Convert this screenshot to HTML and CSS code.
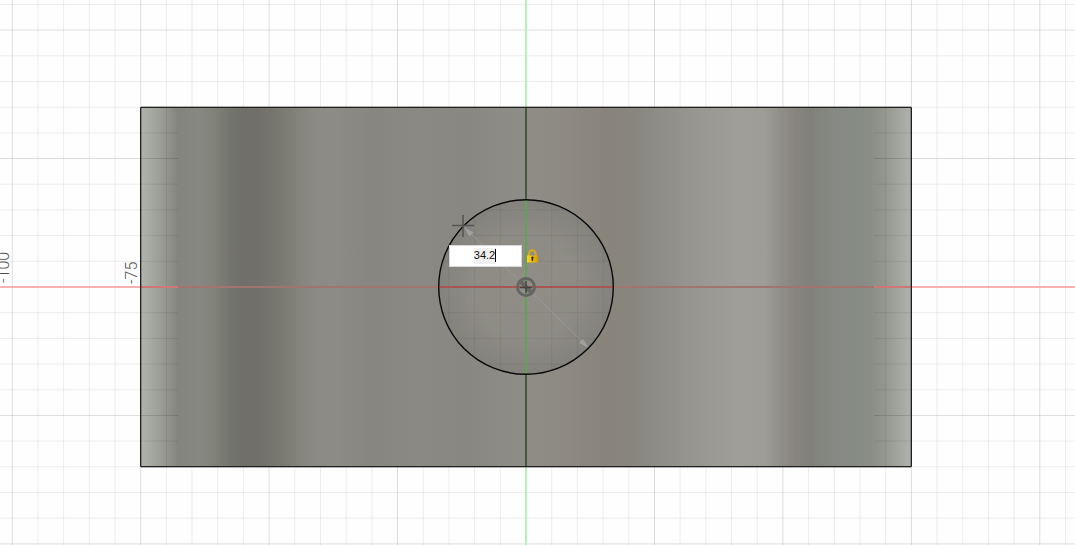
FILE: index.html
```html
<!DOCTYPE html>
<html lang="en">
<head>
<meta charset="utf-8">
<title>Sketch</title>
<link rel="stylesheet" href="styles.css">
</head>
<body>
<main class="viewport">
  <svg class="canvas" viewBox="0 0 1075 545" preserveAspectRatio="xMidYMid slice" role="img" aria-label="Sketch canvas">
    <defs>
      <linearGradient id="metal" gradientUnits="userSpaceOnUse" x1="141" y1="0" x2="911" y2="0">
        <stop offset="0" stop-color="#b1b4ad"/>
        <stop offset=".02" stop-color="#a0a39c"/>
        <stop offset=".034" stop-color="#92948d"/>
        <stop offset=".048" stop-color="#83847d"/>
        <stop offset=".075" stop-color="#868881"/>
        <stop offset=".092" stop-color="#82847c"/>
        <stop offset=".116" stop-color="#74756d"/>
        <stop offset=".133" stop-color="#706f69"/>
        <stop offset=".15" stop-color="#716f69"/>
        <stop offset=".168" stop-color="#75746c"/>
        <stop offset=".19" stop-color="#7e7d74"/>
        <stop offset=".206" stop-color="#85847c"/>
        <stop offset=".226" stop-color="#8b8a84"/>
        <stop offset=".25" stop-color="#8c8b86"/>
        <stop offset=".3" stop-color="#878680"/>
        <stop offset=".36" stop-color="#8a8983"/>
        <stop offset=".42" stop-color="#888781"/>
        <stop offset=".499" stop-color="#8e8d87"/>
        <stop offset=".501" stop-color="#908d86"/>
        <stop offset=".55" stop-color="#8d8a83"/>
        <stop offset=".608" stop-color="#88847c"/>
        <stop offset=".64" stop-color="#88867f"/>
        <stop offset=".67" stop-color="#8d8c86"/>
        <stop offset=".73" stop-color="#9a9892"/>
        <stop offset=".78" stop-color="#9f9e98"/>
        <stop offset=".81" stop-color="#9d9c95"/>
        <stop offset=".83" stop-color="#918f89"/>
        <stop offset=".85" stop-color="#86847d"/>
        <stop offset=".87" stop-color="#80817a"/>
        <stop offset=".9" stop-color="#868984"/>
        <stop offset=".945" stop-color="#898d86"/>
        <stop offset=".965" stop-color="#93968d"/>
        <stop offset="1" stop-color="#b0b2ad"/>
      </linearGradient>
      <radialGradient id="bore">
        <stop offset="0" stop-color="#918e87"/>
        <stop offset=".6" stop-color="#8e8c85"/>
        <stop offset="1" stop-color="#84837d"/>
      </radialGradient>
      <linearGradient id="gold" x1="0" y1="0" x2="1" y2="0">
        <stop offset="0" stop-color="#f9d52c"/>
        <stop offset=".5" stop-color="#ecbc0c"/>
        <stop offset="1" stop-color="#cf9b00"/>
      </linearGradient>
      <clipPath id="circle-area"><circle cx="526" cy="287" r="87"/></clipPath>
      <clipPath id="edge-area"><path d="M141 107h37v360h-37zM874 107h37v360h-37z"/></clipPath>
      <g id="grid">
        <path class="minor" d="M37.9 0V545M63.6 0V545M89.3 0V545M115 0V545M166.4 0V545M192 0V545M217.7 0V545M243.4 0V545M294.8 0V545M320.5 0V545M346.2 0V545M371.9 0V545M423.2 0V545M448.9 0V545M474.6 0V545M500.3 0V545M551.7 0V545M577.4 0V545M603.1 0V545M628.8 0V545M680.1 0V545M705.8 0V545M731.5 0V545M757.2 0V545M808.6 0V545M834.3 0V545M860 0V545M885.7 0V545M937 0V545M962.7 0V545M988.4 0V545M1014.1 0V545M1065.5 0V545M0 4.4H1075M0 55.8H1075M0 81.5H1075M0 107.2H1075M0 132.9H1075M0 184.2H1075M0 209.9H1075M0 235.6H1075M0 261.3H1075M0 312.7H1075M0 338.4H1075M0 364.1H1075M0 389.8H1075M0 441.1H1075M0 466.8H1075M0 492.5H1075M0 518.2H1075"/>
        <path class="major" d="M12.3 0V545M140.7 0V545M269.1 0V545M397.5 0V545M654.5 0V545M782.9 0V545M911.4 0V545M1039.8 0V545M0 30H1075M0 158.5H1075M0 415.5H1075M0 543.9H1075"/>
      </g>
    </defs>

    <use href="#grid"/>
    <path class="axis-x" d="M0 287H1075"/>
    <path class="axis-y" d="M526 0V545"/>

    <rect x="141" y="107" width="770" height="359.5" fill="url(#metal)"/>
    <use href="#grid" clip-path="url(#edge-area)"/>
    <path class="axis-x-body" d="M178 287H874"/>
    <path class="axis-x-edge" d="M141 287H178M874 287H911"/>
    <path class="axis-y-body" d="M526 107V467"/>
    <path class="body-edge-soft" d="M141 106.5H911M141 467.5H911M141.5 108V466M910.5 108V466"/>
    <path class="body-edge" d="M140.5 107.5H911.5V466.5H140.5Z"/>

    <circle cx="526" cy="287" r="87" fill="url(#bore)"/>
    <use class="bore-grid" href="#grid" clip-path="url(#circle-area)"/>
    <path class="dimension" d="M464 227L588 347"/>
    <path class="dimension-head" d="M464 227l9.500 5.500-4 4zM589 348l-10-5 4-4z"/>
    <path class="axis-x-bore" d="M439 287H613"/>
    <path class="axis-y-bore" d="M526 200V374"/>
    <circle class="sketch-circle" cx="526" cy="287" r="87.3"/>

    <path class="cursor" d="M452 225.5H474M463 215V237"/>
    <circle class="origin-ring" cx="526" cy="287" r="8.5"/>
    <path class="origin-bar" d="M520 281L532 293"/>
    <path class="origin-cross" d="M520 287.5H532M526 281V293"/>

    <text class="tick" transform="translate(9 283) rotate(-90)">-100</text>
    <text class="tick" transform="translate(137 284) rotate(-90)">-75</text>

    <path class="shackle" d="M529 256V253.500a3.300 3.300 0 0 1 6.600 0V256"/>
    <path class="lock-body" d="M527 255.500h11v7h-11z" fill="url(#gold)"/>
    <path class="keyhole" d="M532.400 256.300l1.700 1.700-1 .6V261h-1.400v-2.400l-1-.6z"/>
  </svg>
  <input class="dimension-input" type="text" value="34.2" aria-label="Diameter">
  <span class="caret"></span>
</main>
</body>
</html>
```
FILE: styles.css
```css
body {
  margin: 0;
  background: #fefefe;
}

.viewport {
  position: relative;
  height: 100vh;
  overflow: hidden;
  font-family: "Liberation Sans", Arial, sans-serif;
}

.canvas {
  display: block;
  width: 100%;
  height: 100%;
}

.canvas path,
.sketch-circle,
.origin-ring {
  fill: none;
}

.minor { stroke: rgba(0, 0, 0, 0.07); }
.major { stroke: rgba(0, 0, 0, 0.13); }
.bore-grid { opacity: 0.8; }

.axis-x { stroke: #f9b0b0; stroke-width: 2; }
.axis-y { stroke: #b5f2b5; stroke-width: 2; }
.axis-x-body { stroke: #a3736d; stroke-width: 2; }
.axis-x-edge { stroke: #cf7773; stroke-width: 2; }
.axis-y-body { stroke: #405c3e; stroke-width: 2; }
.axis-x-bore { stroke: #ab5550; stroke-width: 2; }
.axis-y-bore { stroke: #5ba652; stroke-width: 2; }

.body-edge { stroke: #1f201f; }
.body-edge-soft { stroke: rgba(50, 50, 50, 0.35); }
.sketch-circle { stroke: #080808; stroke-width: 1.4; }

.dimension { stroke: #999; }
.canvas .dimension-head { fill: #a0a0a0; }

.cursor { stroke: #555550; stroke-width: 1.5; }
.origin-ring { stroke: #656561; stroke-width: 3; }
.origin-bar { stroke: #656561; stroke-width: 4; }
.origin-cross { stroke: #454542; stroke-width: 1.5; }

.tick {
  fill: #505050;
  font-family: Roboto, "Liberation Sans", sans-serif;
  font-size: 16px;
  font-weight: 300;
}

.shackle { stroke: #d9aa1a; stroke-width: 2; }
.canvas .lock-body { fill: url(#gold); }
.canvas .keyhole { fill: #302708; }

.dimension-input {
  position: absolute;
  left: calc(50% - 89px);
  top: calc(50% - 28px);
  box-sizing: border-box;
  width: 73px;
  height: 22px;
  padding: 0 1px 2px 0;
  border: 1px solid #d8d8d8;
  background: linear-gradient(#f0f0f0, #f0f0f0) center / 22px 16px no-repeat #fff;
  color: #111;
  font: 11px "Liberation Sans", Arial, sans-serif;
  text-align: center;
}

.caret {
  position: absolute;
  left: calc(50% - 43px);
  top: calc(50% - 24px);
  width: 1px;
  height: 13px;
  background: #000;
}
```
